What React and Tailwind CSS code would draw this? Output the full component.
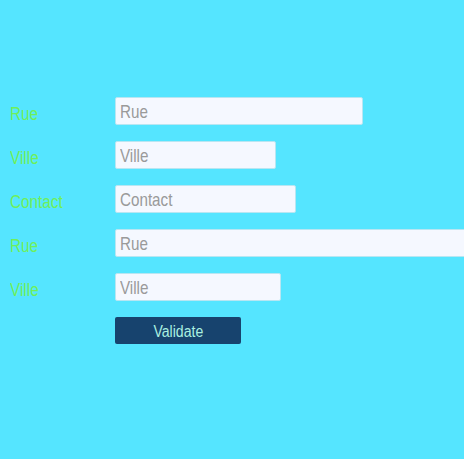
const rows = [
  { label: 'Rue', w: 'w-[248px]' },
  { label: 'Ville', w: 'w-[161px]' },
  { label: 'Contact', w: 'w-[181px]' },
  { label: 'Rue', w: 'w-[352px]' },
  { label: 'Ville', w: 'w-[166px]' },
];

export default function App() {
  return (
    <div className="min-h-[459px] w-[464px] overflow-hidden bg-[#55e5ff] pt-[97px] pl-[10px] font-['Liberation_Sans',Arial,sans-serif]">
      <div className="flex flex-col gap-[16px]">
        {rows.map((r, i) => (
          <div key={i} className="flex h-[28px] items-center">
            <label className="w-[105px] shrink-0 pt-[5px] text-[18px] leading-none text-[#6ff05a]">
              <span className="inline-block origin-left scale-x-[0.85]">{r.label}</span>
            </label>
            <div className={`${r.w} h-[28px] shrink-0 overflow-hidden rounded-[2px] border border-[#b8e6f2] bg-[#f5f8ff]`}>
              <input
                placeholder={r.label}
                className="h-full w-[125%] origin-left scale-x-[0.8] bg-transparent pl-[5px] pt-[2px] text-[19px] text-gray-700 outline-none placeholder:text-[#9a9a9a]"
              />
            </div>
          </div>
        ))}
        <div className="pl-[105px]">
          <button className="h-[27px] w-[126px] rounded-[2px] bg-[#17436e] pt-[2px] text-[16px] text-[#aaf0e0]">
            <span className="inline-block scale-x-[0.88]">Validate</span>
          </button>
        </div>
      </div>
    </div>
  );
}
